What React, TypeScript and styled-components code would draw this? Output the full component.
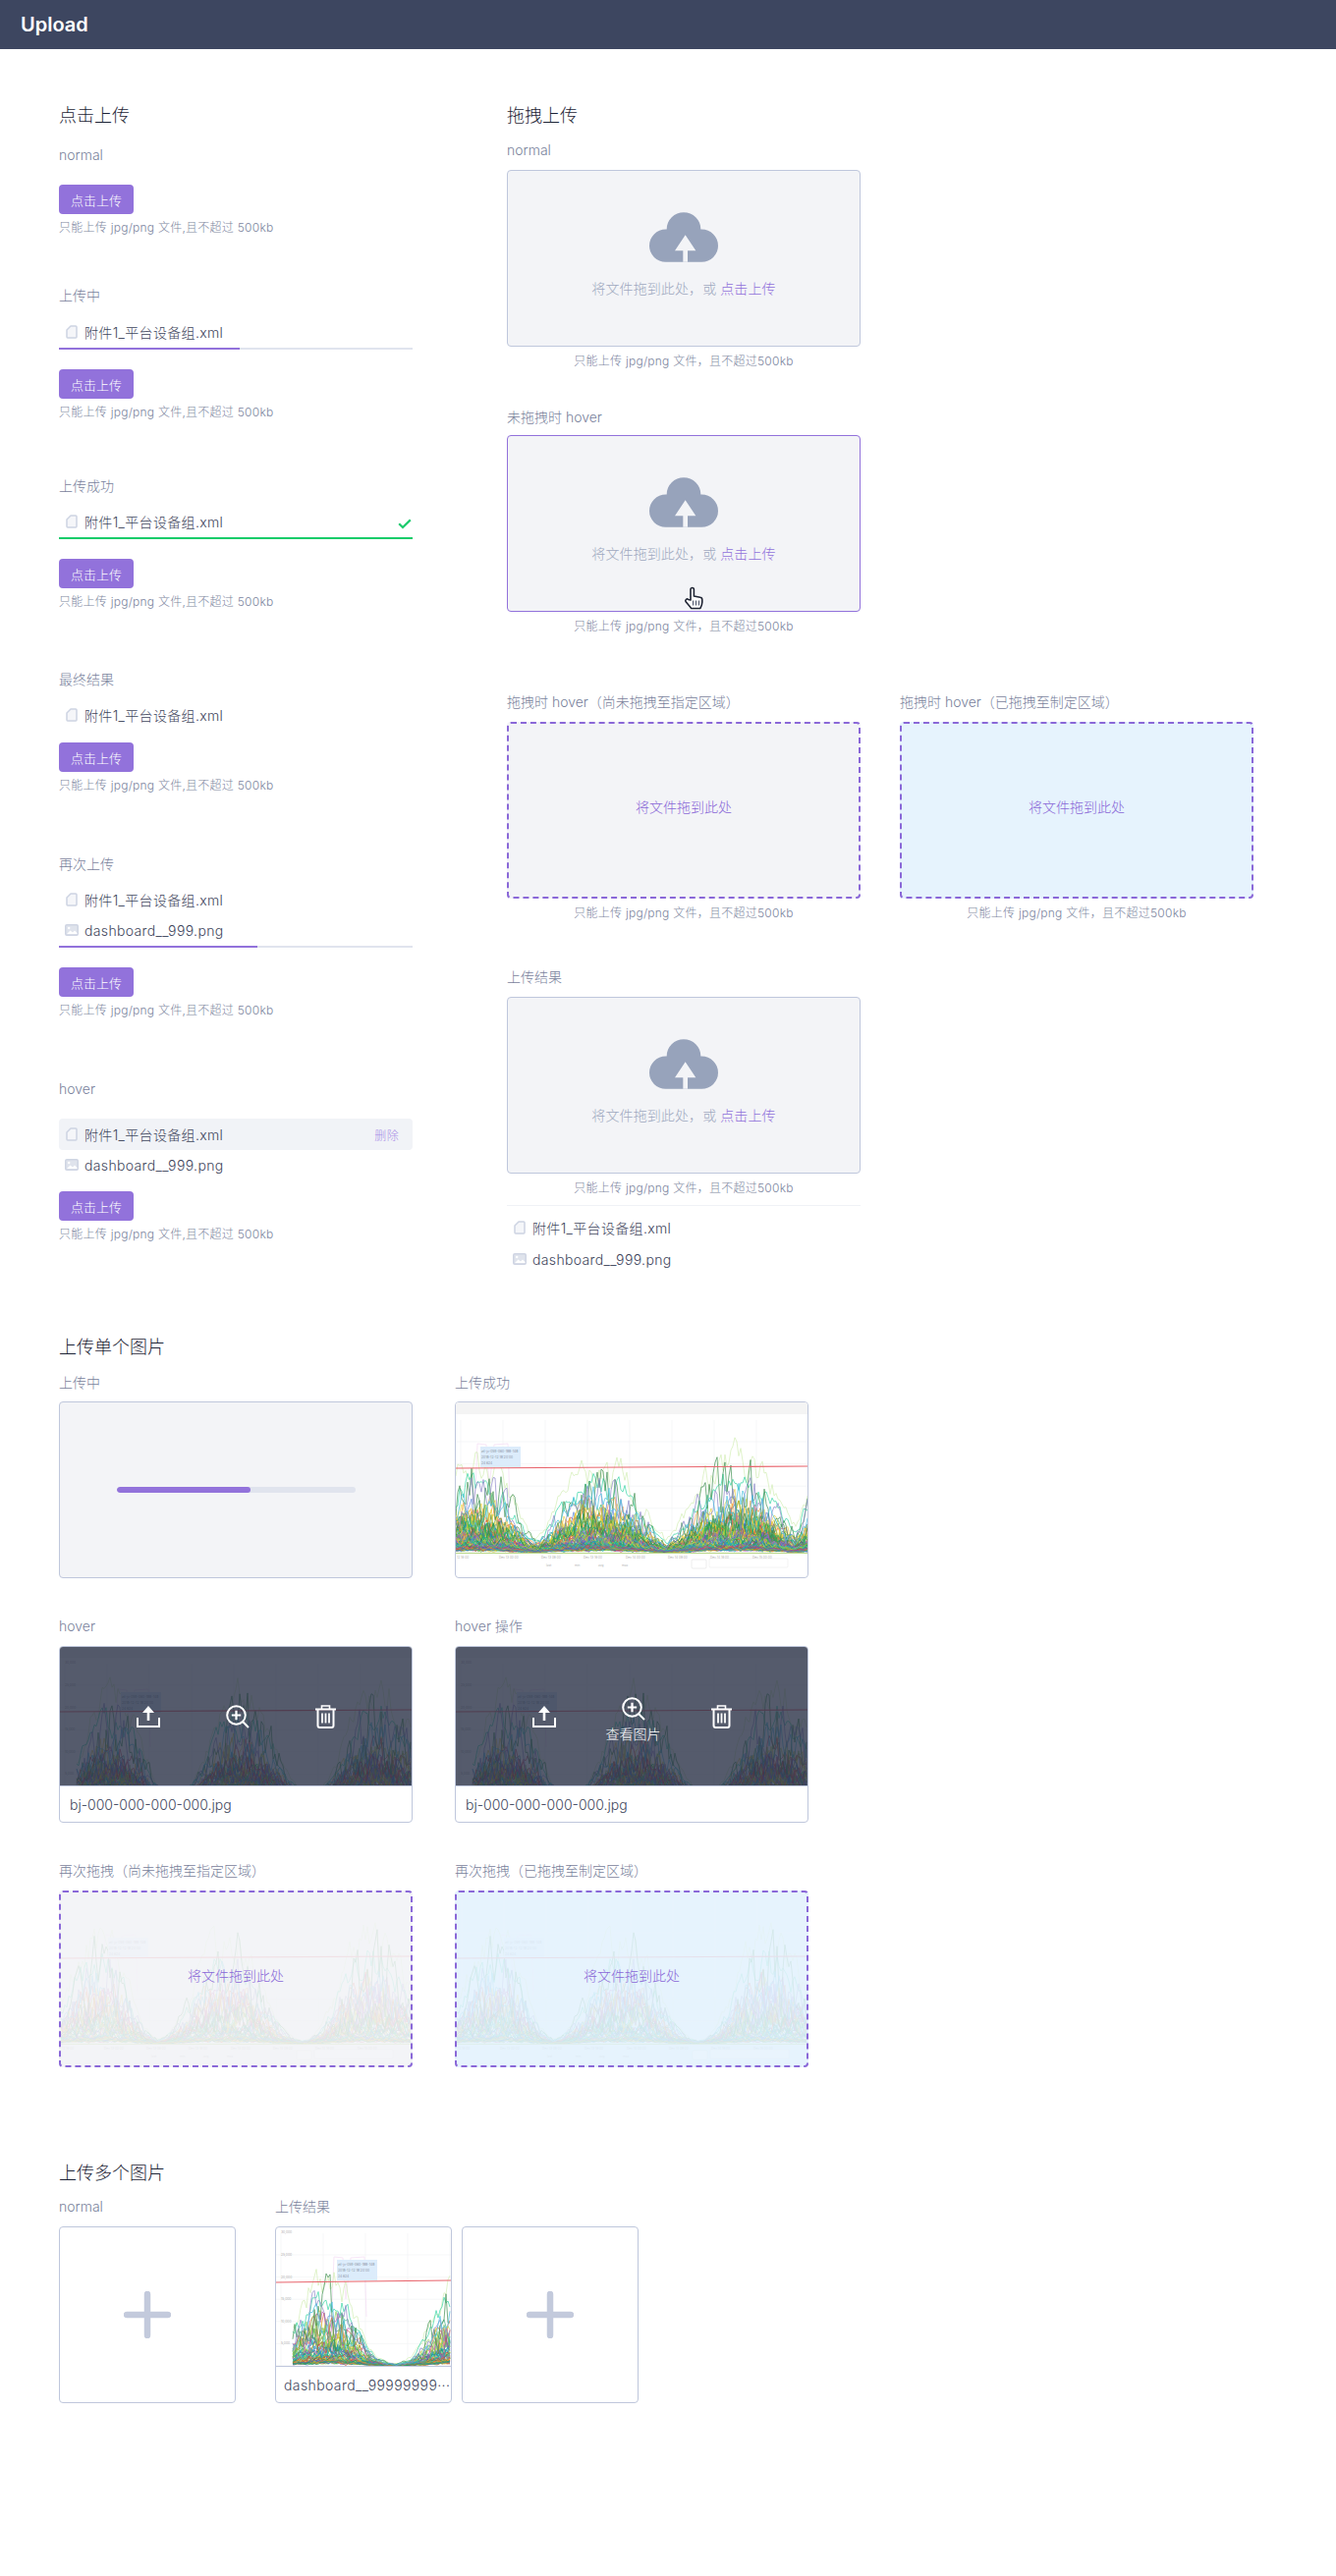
import React from "react";
import styled, { createGlobalStyle, css } from "styled-components";

const GlobalStyle = createGlobalStyle`
  html, body {
    margin: 0;
    padding: 0;
    background: #fff;
  }
  body {
    font-family: Inter, "Noto Sans CJK SC", sans-serif;
    font-weight: 300;
    color: #3f475d;
  }
`;

const PALETTE = [
  "#17b35a", "#e5c72a", "#1fa3c9", "#8e6bc9", "#e0492f", "#2f8a45", "#12c9b0",
  "#b43fa8", "#7fc241", "#3d6fd1", "#f08a24", "#22a06b", "#e8d92f", "#a5d63a",
  "#c9304e", "#0e8f8f",
];

type Hump = { cx: number; w: number; h: number };

type ChartProps = {
  width: number;
  height: number;
  base: number;
  redY: number;
  humps: Hump[];
  tipX: number;
  tipY: number;
  strip?: number;
  axis?: boolean;
  footer?: boolean;
  seed?: number;
  count?: number;
};

function makeRandom(seed: number) {
  let s = seed;
  return () => {
    s = (s + 0x6d2b79f5) | 0;
    let t = Math.imul(s ^ (s >>> 15), 1 | s);
    t = (t + Math.imul(t ^ (t >>> 7), 61 | t)) ^ t;
    return ((t ^ (t >>> 14)) >>> 0) / 4294967296;
  };
}

function buildLine(
  rnd: () => number,
  startX: number,
  width: number,
  base: number,
  humps: Hump[],
  amp: number,
  rough: number,
) {
  let n = 0;
  let d = "";
  for (let x = startX; x <= width; x += 2) {
    n = n * 0.55 + (rnd() - 0.5) * rough;
    let env = 0;
    for (const h of humps) {
      env = Math.max(env, h.h * Math.exp(-Math.pow(Math.abs(x - h.cx) / h.w, 2.6)));
    }
    const y = Math.min(base, base - env * amp * (1 + n) - rnd() * 1.6);
    d += `${d ? "L" : "M"}${x} ${y.toFixed(1)}`;
  }
  return d;
}

function Chart({
  width,
  height,
  base,
  redY,
  humps,
  tipX,
  tipY,
  strip = 0,
  axis = false,
  footer = false,
  seed = 7,
  count = 70,
}: ChartProps) {
  const rnd = makeRandom(seed);
  const startX = axis ? 17 : 0;
  const lines: { d: string; color: string; sw: number }[] = [];
  for (let i = 0; i < count; i++) {
    const amp = Math.pow(rnd(), 2.6) * 0.62 + 0.05;
    lines.push({
      d: buildLine(rnd, startX, width, base, humps, amp, 1),
      color: PALETTE[i % PALETTE.length],
      sw: 0.6,
    });
  }
  const accents: [string, number, number][] = [
    ["#d3eeb4", 1.65, 0.35],
    ["#35d6a5", 1.25, 0.4],
    ["#3f8f50", 1.1, 1],
    ["#8d86c9", 0.95, 0.9],
    ["#45bfe0", 0.9, 0.7],
  ];
  const top = accents.map(([color, amp, rough]) => ({
    d: buildLine(rnd, startX, width, base, humps, amp, rough),
    color,
    sw: 0.7,
  }));
  const gridX = Array.from({ length: 8 }, (_, i) => 5 + i * 43);
  const gridY = [0, 1, 2, 3, 4, 5].map((i) => base - i * 22.6);
  const plateau = `M${tipX - 6} ${base - 40}L${tipX - 3} ${tipY - 3}L${tipX + 6} ${tipY - 2}L${tipX + 9} ${tipY + 40}L${tipX + 14} ${tipY - 2}L${tipX + 28} ${tipY - 3}L${tipX + 30} ${base - 50}`;

  return (
    <ChartSvg viewBox={`0 0 ${width} ${height}`} width={width} height={height} preserveAspectRatio="xMidYMin slice">
      {gridX.map((x) => (
        <line key={x} x1={x} x2={x} y1={strip + 6} y2={base} stroke="#f2f3f5" strokeWidth="0.7" />
      ))}
      {gridY.map((y) => (
        <line key={y} x1="0" x2={width} y1={y} y2={y} stroke="#f2f3f5" strokeWidth="0.7" />
      ))}
      {strip > 0 && <rect x="0" y="0" width={width} height={strip} fill="#f4f4f4" />}
      {axis &&
        ["5,000", "10,000", "15,000", "20,000", "25,000", "30,000"].map((t, i) => (
          <text key={t} x="5" y={base - (i + 1) * 22.6 + 1} fontSize="3.4" fill="#9a9a9a">
            {t}
          </text>
        ))}
      <path d={plateau} fill="none" stroke="#f5dff5" strokeWidth="0.8" />
      {lines.map((l, i) => (
        <path key={i} d={l.d} fill="none" stroke={l.color} strokeWidth={l.sw} />
      ))}
      {top.map((l, i) => (
        <path key={i} d={l.d} fill="none" stroke={l.color} strokeWidth={l.sw} />
      ))}
      <rect x={tipX} y={tipY} width="41" height="21" fill="#dcecfb" />
      <text x={tipX + 1} y={tipY + 5.5} fontSize="3.4" fill="#77808f">
        ztl-jv-059-060-188-148
      </text>
      <text x={tipX + 1} y={tipY + 11.5} fontSize="3.4" fill="#77808f">
        2018-12-12 18:20:00
      </text>
      <text x={tipX + 1} y={tipY + 17.5} fontSize="3.4" fill="#77808f">
        24.624
      </text>
      <line x1="0" x2={width} y1={redY + 1} y2={redY - 1} stroke="#e8636b" strokeWidth="1.1" />
      {footer && (
        <>
          <line x1="0" x2={width} y1={base + 0.5} y2={base + 0.5} stroke="#a9cf6a" strokeWidth="0.8" />
          {["12 16:00", "Dec 13 00:00", "Dec 13 08:00", "Dec 13 16:00", "Dec 14 00:00", "Dec 14 08:00", "Dec 14 16:00", "Dec 15 00:00"].map(
            (t, i) => (
              <text key={t} x={1 + i * 43} y={base + 6} fontSize="3.2" fill="#9a9a9a">
                {t}
              </text>
            ),
          )}
          {[["last", 92], ["min", 121], ["avg", 145], ["max", 169]].map(([t, x]) => (
            <text key={t as string} x={x as number} y={base + 14} fontSize="3.2" fill="#9a9a9a">
              {t}
            </text>
          ))}
          <rect x="240" y={base + 7} width="15" height="9" rx="1" fill="#fff" stroke="#d8d8d8" strokeWidth="0.5" />
          <rect x="258" y={base + 6} width="80" height="9" rx="1" fill="#fff" stroke="#e4e4e4" strokeWidth="0.5" />
        </>
      )}
    </ChartSvg>
  );
}

const FileIcon = () => (
  <IconBox>
    <svg width="12" height="14" viewBox="0 0 12 14" fill="none">
      <path
        d="M5 1H10a1 1 0 0 1 1 1v10a1 1 0 0 1-1 1H2a1 1 0 0 1-1-1V5Z"
        fill="#f5f6f9"
        stroke="#cdd3e2"
        strokeWidth="1.5"
        strokeLinejoin="round"
      />
    </svg>
  </IconBox>
);

const ImageIcon = () => (
  <IconBox>
    <svg width="14" height="12" viewBox="0 0 14 12" fill="none">
      <rect x="0" y="0" width="14" height="12" rx="2" fill="#cfd5e3" />
      <rect x="1.5" y="1.5" width="11" height="9" rx="0.8" fill="#dfe3ec" />
      <circle cx="4.2" cy="4" r="1.2" fill="#fff" />
      <path d="M2 10 5.5 6.5 8 8.5 10 6.5 12.5 9V10Z" fill="#fff" />
    </svg>
  </IconBox>
);

const CheckIcon = () => (
  <CheckMark width="14" height="11" viewBox="0 0 14 11" fill="none">
    <path d="M1.2 5.2 5 9 12.8 1.4" stroke="#1ecb6e" strokeWidth="2.2" />
  </CheckMark>
);

const CloudIcon = () => (
  <svg width="70" height="51" viewBox="0 0 210 152">
    <path d="M50 152A50 50 0 0 1 50 52h3A52 52 0 0 1 157 52h3A50 50 0 0 1 160 152Z" fill="#97a3bb" />
    <path d="M110 69 142 117H117V152H103V117H78Z" fill="#f3f4f7" />
  </svg>
);

const HandCursor = () => (
  <Cursor width="22" height="24" viewBox="0 0 22 24" fill="none">
    <path
      d="M7 14V3.2a1.7 1.7 0 0 1 3.4 0V10l6.4 1.3a2.4 2.4 0 0 1 2 2.4v2.6c0 2.4-1 4.2-2 6.2H7.6c-1-2-3.2-3.8-5.6-7a1.7 1.7 0 0 1 2.7-2Z"
      fill="#fff"
      stroke="#1f2433"
      strokeWidth="1.6"
      strokeLinejoin="round"
    />
    <path d="M9.5 14.5v5M12.5 14.5v5M15.5 14.5v5" stroke="#4a5268" strokeWidth="1" />
  </Cursor>
);

const UploadGlyph = () => (
  <svg width="24" height="22" viewBox="0 0 24 22" fill="none">
    <path d="M1 12v9h22v-9" stroke="#fff" strokeWidth="2" />
    <path d="M12 0 18 7H13.3V15H10.7V7H6Z" fill="#fff" />
  </svg>
);

const ZoomGlyph = () => (
  <svg width="24" height="24" viewBox="0 0 24 24" fill="none">
    <circle cx="10.5" cy="10.5" r="9.3" stroke="#fff" strokeWidth="2" />
    <path d="M10.5 5.8v9.4M5.8 10.5h9.4" stroke="#fff" strokeWidth="2.2" />
    <path d="M17.5 17.5 23 23" stroke="#fff" strokeWidth="2" />
  </svg>
);

const TrashGlyph = () => (
  <svg width="21" height="24" viewBox="0 0 21 24" fill="none">
    <path d="M0 4.5h21" stroke="#fff" strokeWidth="2" />
    <path d="M6.5 4V1h8v3" stroke="#fff" strokeWidth="1.6" />
    <path d="M2.5 5v16a2 2 0 0 0 2 2h12a2 2 0 0 0 2-2V5" stroke="#fff" strokeWidth="2" />
    <path d="M7 8.5v10M10.5 8.5v10M14 8.5v10" stroke="#fff" strokeWidth="1.8" />
  </svg>
);

const PlusIcon = () => (
  <svg width="48" height="48" viewBox="0 0 48 48">
    <path d="M24 3v42M3 24h42" stroke="#c3cadc" strokeWidth="6.5" strokeLinecap="round" />
  </svg>
);

const FILE_XML = "附件1_平台设备组.xml";
const FILE_PNG = "dashboard__999.png";
const TIP_LEFT = "只能上传 jpg/png 文件,且不超过 500kb";
const TIP_RIGHT = "只能上传 jpg/png 文件，且不超过500kb";

const HUMPS_SUCCESS: Hump[] = [
  { cx: 22, w: 46, h: 52 },
  { cx: 147, w: 52, h: 52 },
  { cx: 285, w: 54, h: 56 },
  { cx: 372, w: 26, h: 40 },
];
const HUMPS_HOVER: Hump[] = [
  { cx: 52, w: 36, h: 60 },
  { cx: 186, w: 40, h: 60 },
  { cx: 325, w: 42, h: 62 },
];
const HUMPS_DROP: Hump[] = [
  { cx: 38, w: 38, h: 60 },
  { cx: 170, w: 44, h: 60 },
  { cx: 318, w: 42, h: 64 },
];
const HUMPS_CARD: Hump[] = [
  { cx: 52, w: 38, h: 52 },
  { cx: 190, w: 38, h: 54 },
];

function UploadIdle() {
  return (
    <>
      <CloudIcon />
      <DropText>
        将文件拖到此处，或 <DropLink>点击上传</DropLink>
      </DropText>
    </>
  );
}

function HoverCard({ active }: { active?: boolean }) {
  return (
    <ImageCard>
      <ImageArea>
        <Chart width={358} height={142} base={152} redY={65} humps={HUMPS_HOVER} tipX={62} tipY={46} strip={11} axis seed={21} />
        <Overlay>
          <Action>
            <UploadGlyph />
          </Action>
          <Action $raised={active}>
            <ZoomGlyph />
            {active && <ActionLabel>查看图片</ActionLabel>}
          </Action>
          <Action>
            <TrashGlyph />
          </Action>
        </Overlay>
      </ImageArea>
      <Caption>bj-000-000-000-000.jpg</Caption>
    </ImageCard>
  );
}

function DropAgain({ active }: { active?: boolean }) {
  return (
    <DropZone $variant={active ? "dashedActive" : "dashed"}>
      <FadedLayer>
        <Chart width={356} height={176} base={154} redY={66} humps={HUMPS_DROP} tipX={48} tipY={46} footer seed={33} count={45} />
      </FadedLayer>
      <DropHint>将文件拖到此处</DropHint>
    </DropZone>
  );
}

export default function App() {
  return (
    <>
      <GlobalStyle />
      <Header>Upload</Header>
      <Main>
        <TopRow>
          <LeftColumn>
            <Title>点击上传</Title>
            <Label $mt={19}>normal</Label>
            <UploadButton $mt={20}>点击上传</UploadButton>
            <Tip>{TIP_LEFT}</Tip>

            <Label $mt={50}>上传中</Label>
            <FileRow $mt={17}>
              <FileIcon />
              {FILE_XML}
            </FileRow>
            <Bar $mt={6}>
              <BarFill $value={51} />
            </Bar>
            <UploadButton $mt={20}>点击上传</UploadButton>
            <Tip>{TIP_LEFT}</Tip>

            <Label $mt={56}>上传成功</Label>
            <FileRow $mt={16}>
              <FileIcon />
              {FILE_XML}
              <CheckIcon />
            </FileRow>
            <Bar $mt={6}>
              <BarFill $value={100} $done />
            </Bar>
            <UploadButton $mt={20}>点击上传</UploadButton>
            <Tip>{TIP_LEFT}</Tip>

            <Label $mt={60}>最终结果</Label>
            <FileRow $mt={16}>
              <FileIcon />
              {FILE_XML}
            </FileRow>
            <UploadButton $mt={18}>点击上传</UploadButton>
            <Tip>{TIP_LEFT}</Tip>

            <Label $mt={61}>再次上传</Label>
            <FileRow $mt={16}>
              <FileIcon />
              {FILE_XML}
            </FileRow>
            <FileRow $mt={11}>
              <ImageIcon />
              {FILE_PNG}
            </FileRow>
            <Bar $mt={6}>
              <BarFill $value={56} />
            </Bar>
            <UploadButton $mt={20}>点击上传</UploadButton>
            <Tip>{TIP_LEFT}</Tip>

            <Label $mt={61}>hover</Label>
            <FileRow $mt={20} $hovered>
              <FileIcon />
              {FILE_XML}
              <DeleteLink>删除</DeleteLink>
            </FileRow>
            <FileRow $mt={5}>
              <ImageIcon />
              {FILE_PNG}
            </FileRow>
            <UploadButton $mt={17}>点击上传</UploadButton>
            <Tip>{TIP_LEFT}</Tip>
          </LeftColumn>

          <DragGrid>
            <DragCell>
              <Title>拖拽上传</Title>
              <Label $mt={14}>normal</Label>
              <DropZone $mt={10}>
                <UploadIdle />
              </DropZone>
              <CenterTip>{TIP_RIGHT}</CenterTip>

              <Label $mt={38}>未拖拽时 hover</Label>
              <DropZone $mt={8} $variant="hover">
                <UploadIdle />
                <HandCursor />
              </DropZone>
              <CenterTip>{TIP_RIGHT}</CenterTip>
            </DragCell>

            <PairRow>
              <DragCell>
                <Label>拖拽时 hover（尚未拖拽至指定区域）</Label>
                <DropZone $mt={10} $variant="dashed">
                  <DropHint>将文件拖到此处</DropHint>
                </DropZone>
                <CenterTip>{TIP_RIGHT}</CenterTip>
              </DragCell>
              <DragCell>
                <Label>拖拽时 hover（已拖拽至制定区域）</Label>
                <DropZone $mt={10} $variant="dashedActive">
                  <DropHint>将文件拖到此处</DropHint>
                </DropZone>
                <CenterTip>{TIP_RIGHT}</CenterTip>
              </DragCell>
            </PairRow>

            <DragCell>
              <Label $mt={46}>上传结果</Label>
              <DropZone $mt={10}>
                <UploadIdle />
              </DropZone>
              <CenterTip>{TIP_RIGHT}</CenterTip>
              <Divider />
              <FileRow $mt={12}>
                <FileIcon />
                {FILE_XML}
              </FileRow>
              <FileRow $mt={12}>
                <ImageIcon />
                {FILE_PNG}
              </FileRow>
            </DragCell>
          </DragGrid>
        </TopRow>

        <Title $mt={67}>上传单个图片</Title>
        <ImageGrid>
          <div>
            <Label>上传中</Label>
            <DropZone $mt={9} $centered>
              <ImageProgress>
                <ImageProgressFill $value={56} />
              </ImageProgress>
            </DropZone>
          </div>
          <div>
            <Label>上传成功</Label>
            <ImageCard $mt={9}>
              <ImageArea $full>
                <Chart width={358} height={178} base={153} redY={66} humps={HUMPS_SUCCESS} tipX={25} tipY={45} strip={12} footer seed={11} count={90} />
              </ImageArea>
            </ImageCard>
          </div>
          <div>
            <Label>hover</Label>
            <CardSlot>
              <HoverCard />
            </CardSlot>
          </div>
          <div>
            <Label>hover 操作</Label>
            <CardSlot>
              <HoverCard active />
            </CardSlot>
          </div>
          <div>
            <Label>再次拖拽（尚未拖拽至指定区域）</Label>
            <CardSlot>
              <DropAgain />
            </CardSlot>
          </div>
          <div>
            <Label>再次拖拽（已拖拽至制定区域）</Label>
            <CardSlot>
              <DropAgain active />
            </CardSlot>
          </div>
        </ImageGrid>

        <Title $mt={95}>上传多个图片</Title>
        <MultiRow>
          <div>
            <Label $mt={13}>normal</Label>
            <PlusCard $mt={10}>
              <PlusIcon />
            </PlusCard>
          </div>
          <div>
            <Label $mt={13}>上传结果</Label>
            <CardPair>
              <ThumbCard>
                <ImageArea>
                  <Chart width={178} height={141} base={141} redY={55} humps={HUMPS_CARD} tipX={62} tipY={33} axis seed={5} count={60} />
                </ImageArea>
                <ThumbCaption>dashboard__99999999···</ThumbCaption>
              </ThumbCard>
              <PlusCard>
                <PlusIcon />
              </PlusCard>
            </CardPair>
          </div>
        </MultiRow>
      </Main>
    </>
  );
}

const Header = styled.header`
  height: 50px;
  background: #3d4660;
  color: #fff;
  font-size: 20px;
  font-weight: 600;
  line-height: 50px;
  padding-left: 21px;
`;

const Main = styled.main`
  padding: 55px 0 175px 60px;
`;

const Title = styled.h2<{ $mt?: number }>`
  margin: ${(p) => p.$mt ?? 0}px 0 -1px;
  padding-top: 1px;
  font-size: 18px;
  font-weight: 300;
  line-height: 24px;
  color: #1d2436;
`;

const Label = styled.div<{ $mt?: number }>`
  margin-top: ${(p) => p.$mt ?? 0}px;
  font-size: 14px;
  line-height: 20px;
  color: #79829c;
`;

const Tip = styled.div`
  margin-top: 5px;
  font-size: 12px;
  line-height: 18px;
  letter-spacing: 0.25px;
  color: #7d86a0;
`;

const CenterTip = styled(Tip)`
  margin-top: 6px;
  text-align: center;
`;

const TopRow = styled.div`
  display: flex;
  gap: 96px;
`;

const LeftColumn = styled.section`
  width: 360px;
  display: flex;
  flex-direction: column;
  align-items: flex-start;
`;

const UploadButton = styled.button<{ $mt?: number }>`
  display: block;
  width: 76px;
  height: 30px;
  margin-top: ${(p) => p.$mt ?? 0}px;
  padding: 0;
  border: none;
  border-radius: 4px;
  background: #9272db;
  color: #fff;
  font: inherit;
  font-size: 13px;
`;

const FileRow = styled.div<{ $mt?: number; $hovered?: boolean }>`
  display: flex;
  align-items: center;
  align-self: stretch;
  margin-top: ${(p) => p.$mt ?? 0}px;
  height: ${(p) => (p.$hovered ? 32 : 20)}px;
  padding-left: 6px;
  font-size: 14px;
  letter-spacing: 0.35px;
  color: #3f475d;
  ${(p) =>
    p.$hovered &&
    css`
      background: #f1f3f7;
      border-radius: 4px;
    `}
`;

const IconBox = styled.span`
  display: flex;
  align-items: center;
  justify-content: center;
  width: 14px;
  margin-right: 6px;
`;

const CheckMark = styled.svg`
  margin-left: auto;
  margin-top: 4px;
  margin-right: 1px;
`;

const DeleteLink = styled.span`
  margin-left: auto;
  margin-right: 14px;
  font-size: 12px;
  color: #a78ce6;
`;

const Bar = styled.div<{ $mt?: number }>`
  align-self: stretch;
  height: 2px;
  margin-top: ${(p) => p.$mt ?? 0}px;
  background: #e0e4ee;
`;

const BarFill = styled.div<{ $value: number; $done?: boolean }>`
  width: ${(p) => p.$value}%;
  height: 100%;
  background: ${(p) => (p.$done ? "#15cc6a" : "#9272db")};
`;

const DragGrid = styled.section`
  width: 760px;
  display: flex;
  flex-direction: column;
`;

const DragCell = styled.div`
  width: 360px;
  display: flex;
  flex-direction: column;
`;

const PairRow = styled.div`
  display: flex;
  gap: 40px;
  margin-top: 58px;
`;

const Divider = styled.div`
  height: 1px;
  margin-top: 8px;
  background: #f0f2f6;
`;

type DropVariant = "normal" | "hover" | "dashed" | "dashedActive";

const dropVariants: Record<DropVariant, ReturnType<typeof css>> = {
  normal: css`
    border: 1px solid #bfc7dc;
    background: #f3f4f7;
  `,
  hover: css`
    border: 1px solid #9272db;
    background: #f3f4f7;
  `,
  dashed: css`
    border: 2px dashed #8a68d8;
    background: #f3f4f7;
  `,
  dashedActive: css`
    border: 2px dashed #8a68d8;
    background: #e6f3fd;
  `,
};

const DropZone = styled.div<{ $mt?: number; $variant?: DropVariant; $centered?: boolean }>`
  position: relative;
  box-sizing: border-box;
  display: flex;
  flex-direction: column;
  align-items: center;
  justify-content: center;
  height: 180px;
  margin-top: ${(p) => p.$mt ?? 0}px;
  padding-bottom: ${(p) => (p.$centered ? 0 : 6)}px;
  border-radius: 4px;
  overflow: hidden;
  ${(p) => dropVariants[p.$variant ?? "normal"]}
`;

const DropText = styled.div`
  margin-top: 17px;
  font-size: 14px;
  line-height: 20px;
  letter-spacing: 0.1px;
  color: #a0a9c0;
`;

const DropLink = styled.span`
  color: #9272db;
`;

const DropHint = styled.div`
  position: relative;
  font-size: 14px;
  line-height: 20px;
  color: #8a68d8;
`;

const Cursor = styled.svg`
  position: absolute;
  left: 179px;
  top: 153px;
`;

const FadedLayer = styled.div`
  position: absolute;
  inset: 0;
  opacity: 0.13;
`;

const ChartSvg = styled.svg`
  display: block;
`;

const ImageGrid = styled.div`
  display: grid;
  grid-template-columns: 360px 360px;
  column-gap: 43px;
  row-gap: 39px;
  margin-top: 15px;
`;

const CardSlot = styled.div`
  margin-top: 10px;
`;

const ImageCard = styled.div<{ $mt?: number }>`
  box-sizing: border-box;
  display: flex;
  flex-direction: column;
  height: 180px;
  margin-top: ${(p) => p.$mt ?? 0}px;
  border: 1px solid #bfc7dc;
  border-radius: 4px;
  background: #fff;
`;

const ImageArea = styled.div<{ $full?: boolean }>`
  position: relative;
  height: ${(p) => (p.$full ? 178 : 141)}px;
  overflow: hidden;
  border-radius: ${(p) => (p.$full ? "3px" : "3px 3px 0 0")};
`;

const Overlay = styled.div`
  position: absolute;
  inset: 0;
  display: flex;
  align-items: center;
  justify-content: center;
  gap: 67px;
  background: rgba(42, 50, 71, 0.8);
`;

const Action = styled.div<{ $raised?: boolean }>`
  position: relative;
  display: flex;
  margin-bottom: ${(p) => (p.$raised ? 16 : 0)}px;
`;

const ActionLabel = styled.span`
  position: absolute;
  top: 100%;
  left: 50%;
  transform: translateX(-50%);
  margin-top: 4px;
  font-size: 14px;
  line-height: 20px;
  white-space: nowrap;
  color: #fff;
`;

const Caption = styled.div`
  flex: 1;
  display: flex;
  align-items: center;
  padding-left: 10px;
  border-top: 1px solid #bfc7dc;
  font-size: 14px;
  white-space: nowrap;
  color: #3f475d;
`;

const ThumbCaption = styled(Caption)`
  padding-left: 8px;
  letter-spacing: 0.4px;
`;

const ImageProgress = styled.div`
  width: 243px;
  height: 6px;
  border-radius: 3px;
  background: #e0e4ee;
  overflow: hidden;
`;

const ImageProgressFill = styled.div<{ $value: number }>`
  width: ${(p) => p.$value}%;
  height: 100%;
  border-radius: 3px;
  background: #9272db;
`;

const MultiRow = styled.div`
  display: flex;
  gap: 40px;
`;

const CardPair = styled.div`
  display: flex;
  gap: 10px;
  margin-top: 10px;
`;

const PlusCard = styled.div<{ $mt?: number }>`
  box-sizing: border-box;
  display: flex;
  align-items: center;
  justify-content: center;
  width: 180px;
  height: 180px;
  margin-top: ${(p) => p.$mt ?? 0}px;
  border: 1px solid #bfc7dc;
  border-radius: 4px;
  background: #fff;
`;

const ThumbCard = styled(ImageCard)`
  width: 180px;
`;
